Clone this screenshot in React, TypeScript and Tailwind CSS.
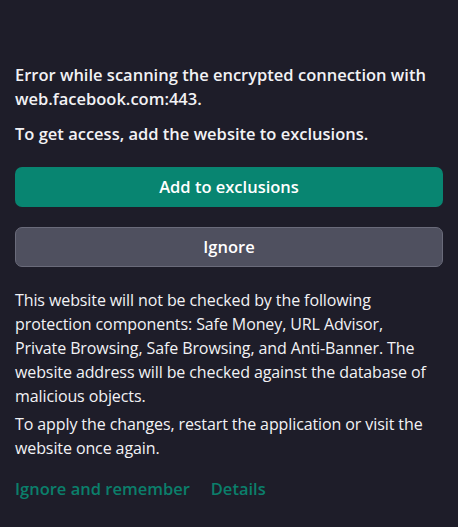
import React from "react";

const bodyLines = [
  "This website will not be checked by the following",
  "protection components: Safe Money, URL Advisor,",
  "Private Browsing, Safe Browsing, and Anti-Banner. The",
  "website address will be checked against the database of",
  "malicious objects.",
];

export default function App() {
  return (
    <div
      className="w-[458px] h-[527px] bg-[#1e1d29] text-[#f2f2f5] px-[15px] pt-[63px] overflow-hidden"
      style={{ fontFamily: '"Open Sans", "Noto Sans", sans-serif' }}
    >
      <p className="text-[16.5px] leading-[24px] font-semibold">
        Error while scanning the encrypted connection with web.facebook.com:443.
      </p>
      <p className="mt-[11px] text-[16.5px] leading-[24px] font-semibold">
        To get access, add the website to exclusions.
      </p>
      <button className="mt-[21px] w-full h-[40px] rounded-[7px] bg-[#088571] text-white text-[16.5px] font-semibold flex items-center justify-center">
        Add to exclusions
      </button>
      <button className="mt-[20px] w-full h-[40px] rounded-[7px] bg-[#4f505f] border border-[#6a6b7a] text-white text-[16.5px] font-semibold flex items-center justify-center">
        Ignore
      </button>
      <p className="mt-[21px] text-[16px] leading-[24px] tracking-[-0.1px]">
        {bodyLines.map((l) => (
          <span key={l} className="block whitespace-nowrap">
            {l}
          </span>
        ))}
      </p>
      <p className="mt-[4px] text-[16px] leading-[24px] tracking-[-0.1px]">
        To apply the changes, restart the application or visit the website once again.
      </p>
      <div className="mt-[17px] flex gap-[21px] text-[16.5px] leading-[24px] font-semibold text-[#0b7f6b]">
        <span>Ignore and remember</span>
        <span>Details</span>
      </div>
    </div>
  );
}
